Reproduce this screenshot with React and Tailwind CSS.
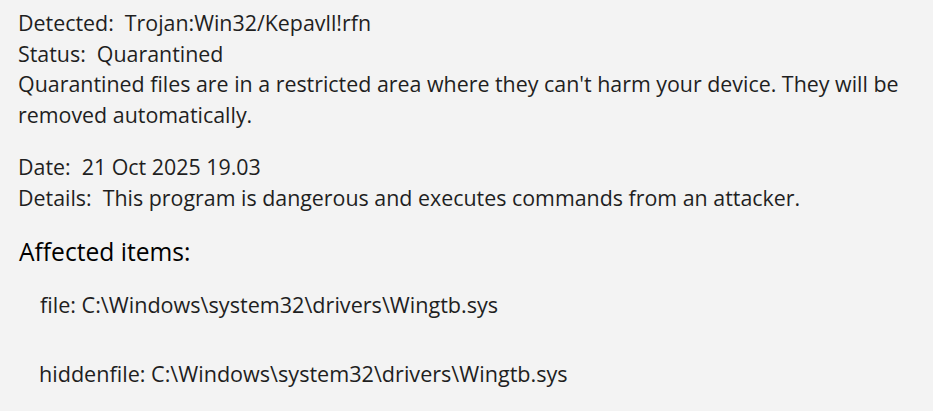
export default function App() {
  const font = { fontFamily: '"Open Sans", "Noto Sans", sans-serif' };

  const Row = ({ label, children }) => (
    <div className="flex gap-[11px]">
      <span>{label}</span>
      <span>{children}</span>
    </div>
  );

  return (
    <div
      className="min-h-[411px] w-[933px] bg-[#f3f3f3] text-[#1f1f1f] pl-[18px] pt-[8px] text-[21.4px] leading-[30.6px] overflow-hidden"
      style={font}
    >
      <div className="max-w-[900px]">
        <Row label="Detected:">Trojan:Win32/Kepavll!rfn</Row>
        <Row label="Status:">Quarantined</Row>
        <p>
          Quarantined files are in a restricted area where they can't harm your device. They will be
          removed automatically.
        </p>
      </div>

      <div className="mt-[22px]">
        <Row label="Date:">21 Oct 2025 19.03</Row>
        <Row label="Details:">This program is dangerous and executes commands from an attacker.</Row>
      </div>

      <h2 className="mt-[23px] pl-[1px] text-[24.6px] leading-[30px] text-black">Affected items:</h2>

      <div className="pl-[22px] mt-[23px] flex flex-col gap-[39px] text-[21.6px]">
        <div>file: C:\Windows\system32\drivers\Wingtb.sys</div>
        <div className="-ml-[1px]">hiddenfile: C:\Windows\system32\drivers\Wingtb.sys</div>
      </div>
    </div>
  );
}
